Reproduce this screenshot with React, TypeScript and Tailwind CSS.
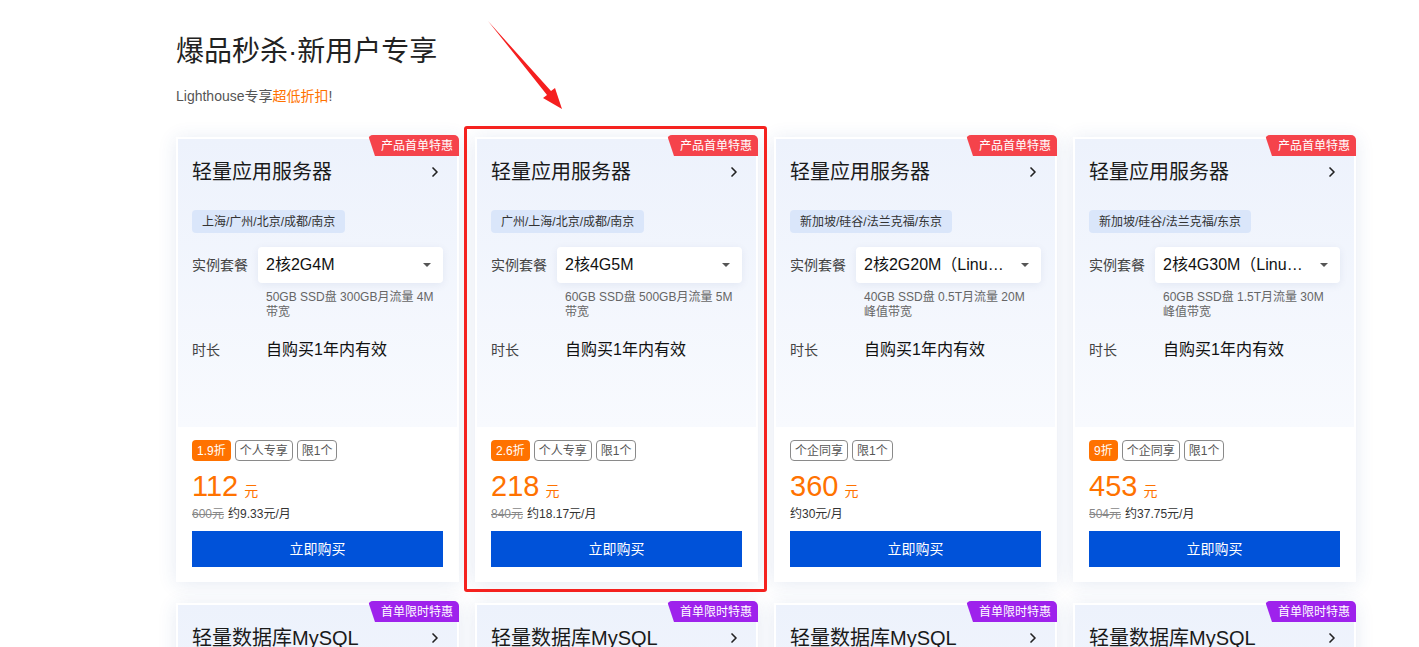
import React from 'react';
import { ChevronRight } from 'lucide-react';

type Plan = {
  title: string;
  ribbon: string;
  ribbonColor: string;
  region: string;
  spec: string;
  desc: string[];
  discount?: string;
  scope: string;
  price: string;
  original?: string;
  monthly: string;
};

const servers: Plan[] = [
  {
    title: '轻量应用服务器',
    ribbon: '产品首单特惠',
    ribbonColor: 'bg-[#f5434b]',
    region: '上海/广州/北京/成都/南京',
    spec: '2核2G4M',
    desc: ['50GB SSD盘 300GB月流量 4M', '带宽'],
    discount: '1.9折',
    scope: '个人专享',
    price: '112',
    original: '600元',
    monthly: '约9.33元/月',
  },
  {
    title: '轻量应用服务器',
    ribbon: '产品首单特惠',
    ribbonColor: 'bg-[#f5434b]',
    region: '广州/上海/北京/成都/南京',
    spec: '2核4G5M',
    desc: ['60GB SSD盘 500GB月流量 5M', '带宽'],
    discount: '2.6折',
    scope: '个人专享',
    price: '218',
    original: '840元',
    monthly: '约18.17元/月',
  },
  {
    title: '轻量应用服务器',
    ribbon: '产品首单特惠',
    ribbonColor: 'bg-[#f5434b]',
    region: '新加坡/硅谷/法兰克福/东京',
    spec: '2核2G20M（Linux专属）',
    desc: ['40GB SSD盘 0.5T月流量 20M', '峰值带宽'],
    scope: '个企同享',
    price: '360',
    monthly: '约30元/月',
  },
  {
    title: '轻量应用服务器',
    ribbon: '产品首单特惠',
    ribbonColor: 'bg-[#f5434b]',
    region: '新加坡/硅谷/法兰克福/东京',
    spec: '2核4G30M（Linux专属）',
    desc: ['60GB SSD盘 1.5T月流量 30M', '峰值带宽'],
    discount: '9折',
    scope: '个企同享',
    price: '453',
    original: '504元',
    monthly: '约37.75元/月',
  },
];

const databases: Plan[] = servers.map((s) => ({
  ...s,
  title: '轻量数据库MySQL',
  ribbon: '首单限时特惠',
  ribbonColor: 'bg-[#9e22ec]',
  spec: '1核1G',
  desc: ['50GB SSD云盘', ''],
}));

const Card: React.FC<{ plan: Plan; highlight?: boolean }> = ({ plan, highlight }) => (
  <div className="relative">
    {highlight && (
      <div className="pointer-events-none absolute -top-[11px] -left-[11px] -right-[9px] -bottom-[10px] z-20 rounded-[3px] border-[3px] border-[#f5221f]" />
    )}
    <div className="relative bg-white p-[2px] shadow-[0_2px_18px_rgba(40,80,160,0.12)]">
      <span
        className={`absolute -top-[2px] right-0 z-10 flex h-[21px] items-center rounded-t-[5px] pl-[13px] pr-[6px] text-[12px] text-white [clip-path:polygon(0_0,100%_0,100%_100%,7px_100%)] ${plan.ribbonColor}`}
      >
        {plan.ribbon}
      </span>

      <div className="h-[288px] bg-gradient-to-b from-[#edf2fc] to-[#f8fafe] px-[14px] pt-[19px]">
        <div className="flex items-center justify-between">
          <span className="text-[20px] leading-[28px] text-[#1a1a1a]">{plan.title}</span>
          <ChevronRight size={16} strokeWidth={2.5} className="text-[#222]" />
        </div>

        <div className="mt-[24px] inline-flex h-[23px] items-center rounded-sm bg-[#dae6fa] px-[10px] text-[12px] text-[#333]">
          {plan.region}
        </div>

        <div className="mt-[14px] flex items-center">
          <span className="w-[66px] shrink-0 text-[14px] text-[#444]">实例套餐</span>
          <div className="flex h-9 flex-1 items-center justify-between rounded-sm bg-white pl-[8px] pr-[12px] shadow-[0_2px_8px_rgba(0,40,120,0.07)]">
            <span className="w-[140px] truncate text-[16px] text-[#111]">{plan.spec}</span>
            <span className="h-0 w-0 border-x-[4px] border-t-[4px] border-x-transparent border-t-[#555]" />
          </div>
        </div>

        <div className="mt-[7px] pl-[74px] text-[12px] leading-[15px] text-[#666]">
          {plan.desc.map((line, i) => (
            <div key={i} className="h-[15px] whitespace-nowrap">
              {line}
            </div>
          ))}
        </div>

        <div className="mt-[18px] flex items-center">
          <span className="w-[74px] shrink-0 text-[14px] text-[#444]">时长</span>
          <span className="text-[16px] text-[#111]">自购买1年内有效</span>
        </div>
      </div>

      <div className="px-[14px] pt-[13px] pb-[13px]">
        <div className="flex gap-[4px] text-[12px] leading-none">
          {plan.discount && (
            <span className="flex h-[21px] items-center rounded-sm bg-[#ff7200] px-[5px] text-white">
              {plan.discount}
            </span>
          )}
          <span className="flex h-[21px] items-center rounded-sm border border-[#8a8a8a] px-[4px] text-[#555]">
            {plan.scope}
          </span>
          <span className="flex h-[21px] items-center rounded-sm border border-[#8a8a8a] px-[4px] text-[#555]">
            限1个
          </span>
        </div>

        <div className="mt-[8px] flex items-baseline gap-[6px] text-[#ff7200]">
          <span className="text-[29px] leading-[34px]">{plan.price}</span>
          <span className="text-[14px]">元</span>
        </div>

        <div className="mt-[2px] flex gap-[4px] text-[12px] leading-[18px]">
          {plan.original && <span className="text-[#888] line-through">{plan.original}</span>}
          <span className="text-[#333]">{plan.monthly}</span>
        </div>

        <button className="mt-[8px] flex h-9 w-full items-center justify-center bg-[#0052d9] text-[14px] text-white">
          立即购买
        </button>
      </div>
    </div>
  </div>
);

export default function App() {
  return (
    <div className="relative min-h-screen bg-white pl-[176px] pt-[30px] font-['Liberation_Sans','Noto_Sans_CJK_SC',sans-serif]">
      <svg className="pointer-events-none absolute left-0 top-0 z-30" width="600" height="120">
        <polygon points="488,21 551,91 555,88 562,109 543,98 547,95" fill="#f51f1f" />
      </svg>

      <h1 className="text-[28px] leading-[44px] text-[#222]">爆品秒杀·新用户专享</h1>
      <p className="mt-[12px] text-[14px] leading-[20px] text-[#555]">
        Lighthouse专享<span className="text-[#ff7200]">超低折扣</span>!
      </p>

      <div className="mt-[31px] grid w-[1180px] grid-cols-4 gap-x-[16px] gap-y-[21px]">
        {servers.map((p, i) => (
          <Card key={'s' + i} plan={p} highlight={i === 1} />
        ))}
        {databases.map((p, i) => (
          <Card key={'d' + i} plan={p} />
        ))}
      </div>
    </div>
  );
}
